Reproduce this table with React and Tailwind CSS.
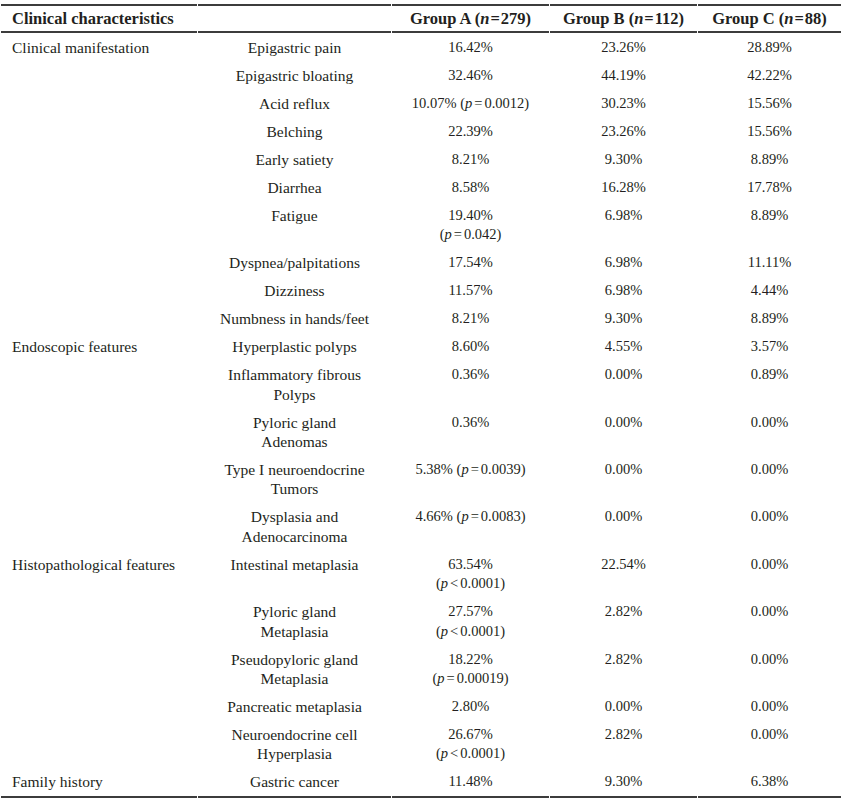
import React from 'react';

const P = ({ op = '=', v }) => (
  <span>
    (<i>p</i>
    <span className="px-[2px]">{op}</span>
    {v})
  </span>
);

const N = ({ v }) => (
  <>
    (<i>n</i>
    <span className="px-px">=</span>
    {v})
  </>
);

const rows = [
  { group: 'Clinical manifestation', item: ['Epigastric pain'], a: ['16.42%'], b: '23.26%', c: '28.89%' },
  { item: ['Epigastric bloating'], a: ['32.46%'], b: '44.19%', c: '42.22%' },
  { item: ['Acid reflux'], a: [<span key="x">10.07% <P v="0.0012" /></span>], b: '30.23%', c: '15.56%' },
  { item: ['Belching'], a: ['22.39%'], b: '23.26%', c: '15.56%' },
  { item: ['Early satiety'], a: ['8.21%'], b: '9.30%', c: '8.89%' },
  { item: ['Diarrhea'], a: ['8.58%'], b: '16.28%', c: '17.78%' },
  { item: ['Fatigue'], a: ['19.40%', <P key="x" v="0.042" />], b: '6.98%', c: '8.89%' },
  { item: ['Dyspnea/palpitations'], a: ['17.54%'], b: '6.98%', c: '11.11%' },
  { item: ['Dizziness'], a: ['11.57%'], b: '6.98%', c: '4.44%' },
  { item: ['Numbness in hands/feet'], a: ['8.21%'], b: '9.30%', c: '8.89%' },
  { group: 'Endoscopic features', item: ['Hyperplastic polyps'], a: ['8.60%'], b: '4.55%', c: '3.57%' },
  { item: ['Inflammatory fibrous', 'Polyps'], a: ['0.36%'], b: '0.00%', c: '0.89%' },
  { item: ['Pyloric gland', 'Adenomas'], a: ['0.36%'], b: '0.00%', c: '0.00%' },
  { item: ['Type I neuroendocrine', 'Tumors'], a: [<span key="x">5.38% <P v="0.0039" /></span>], b: '0.00%', c: '0.00%' },
  { item: ['Dysplasia and', 'Adenocarcinoma'], a: [<span key="x">4.66% <P v="0.0083" /></span>], b: '0.00%', c: '0.00%' },
  { group: 'Histopathological features', item: ['Intestinal metaplasia'], a: ['63.54%', <P key="x" op="<" v="0.0001" />], b: '22.54%', c: '0.00%' },
  { item: ['Pyloric gland', 'Metaplasia'], a: ['27.57%', <P key="x" op="<" v="0.0001" />], b: '2.82%', c: '0.00%' },
  { item: ['Pseudopyloric gland', 'Metaplasia'], a: ['18.22%', <P key="x" v="0.00019" />], b: '2.82%', c: '0.00%' },
  { item: ['Pancreatic metaplasia'], a: ['2.80%'], b: '0.00%', c: '0.00%' },
  { item: ['Neuroendocrine cell', 'Hyperplasia'], a: ['26.67%', <P key="x" op="<" v="0.0001" />], b: '2.82%', c: '0.00%' },
  { group: 'Family history', item: ['Gastric cancer'], a: ['11.48%'], b: '9.30%', c: '6.38%' },
];

const lines = (arr) =>
  arr.map((t, i) => (
    <div key={i}>{t}</div>
  ));

export default function App() {
  return (
    <div className="bg-white min-h-screen pt-[4px]" style={{ fontFamily: '"Liberation Serif", serif' }}>
      <table className="w-[842px] border-separate border-spacing-x-px border-spacing-y-0 table-fixed text-[#231f20] leading-[19.4px]">
        <colgroup>
          <col className="w-[196px]" />
          <col className="w-[193px]" />
          <col className="w-[157px]" />
          <col className="w-[147px]" />
          <col className="w-[143px]" />
        </colgroup>
        <thead>
          <tr className="text-[16.5px] font-bold">
            <th className="border-t-2 border-b-2 border-[#3c3c3c] text-left pl-[11px] py-[3px]">Clinical characteristics</th>
            <th className="border-t-2 border-b-2 border-[#3c3c3c] py-[3px]"></th>
            <th className="border-t-2 border-b-2 border-[#3c3c3c] py-[3px] text-center">
              Group A <N v="279" />
            </th>
            <th className="border-t-2 border-b-2 border-[#3c3c3c] py-[3px] text-center">
              Group B <N v="112" />
            </th>
            <th className="border-t-2 border-b-2 border-[#3c3c3c] py-[3px] text-center">
              Group C <N v="88" />
            </th>
          </tr>
        </thead>
        <tbody>
          {rows.map((r, i) => {
            const last = i === rows.length - 1;
            const bb = last ? 'border-b-2 border-[#3c3c3c]' : '';
            return (
              <tr key={i} className="align-top">
                <td className={`pl-[11px] py-[4.3px] text-[15.5px] text-left ${bb}`}>{r.group || ''}</td>
                <td className={`py-[4.3px] text-[15.5px] text-center ${bb}`}>{lines(r.item)}</td>
                <td className={`py-[4.3px] text-[14.5px] text-center ${bb}`}>{lines(r.a)}</td>
                <td className={`py-[4.3px] text-[14.5px] text-center ${bb}`}>{r.b}</td>
                <td className={`py-[4.3px] text-[14.5px] text-center ${bb}`}>{r.c}</td>
              </tr>
            );
          })}
        </tbody>
      </table>
    </div>
  );
}
